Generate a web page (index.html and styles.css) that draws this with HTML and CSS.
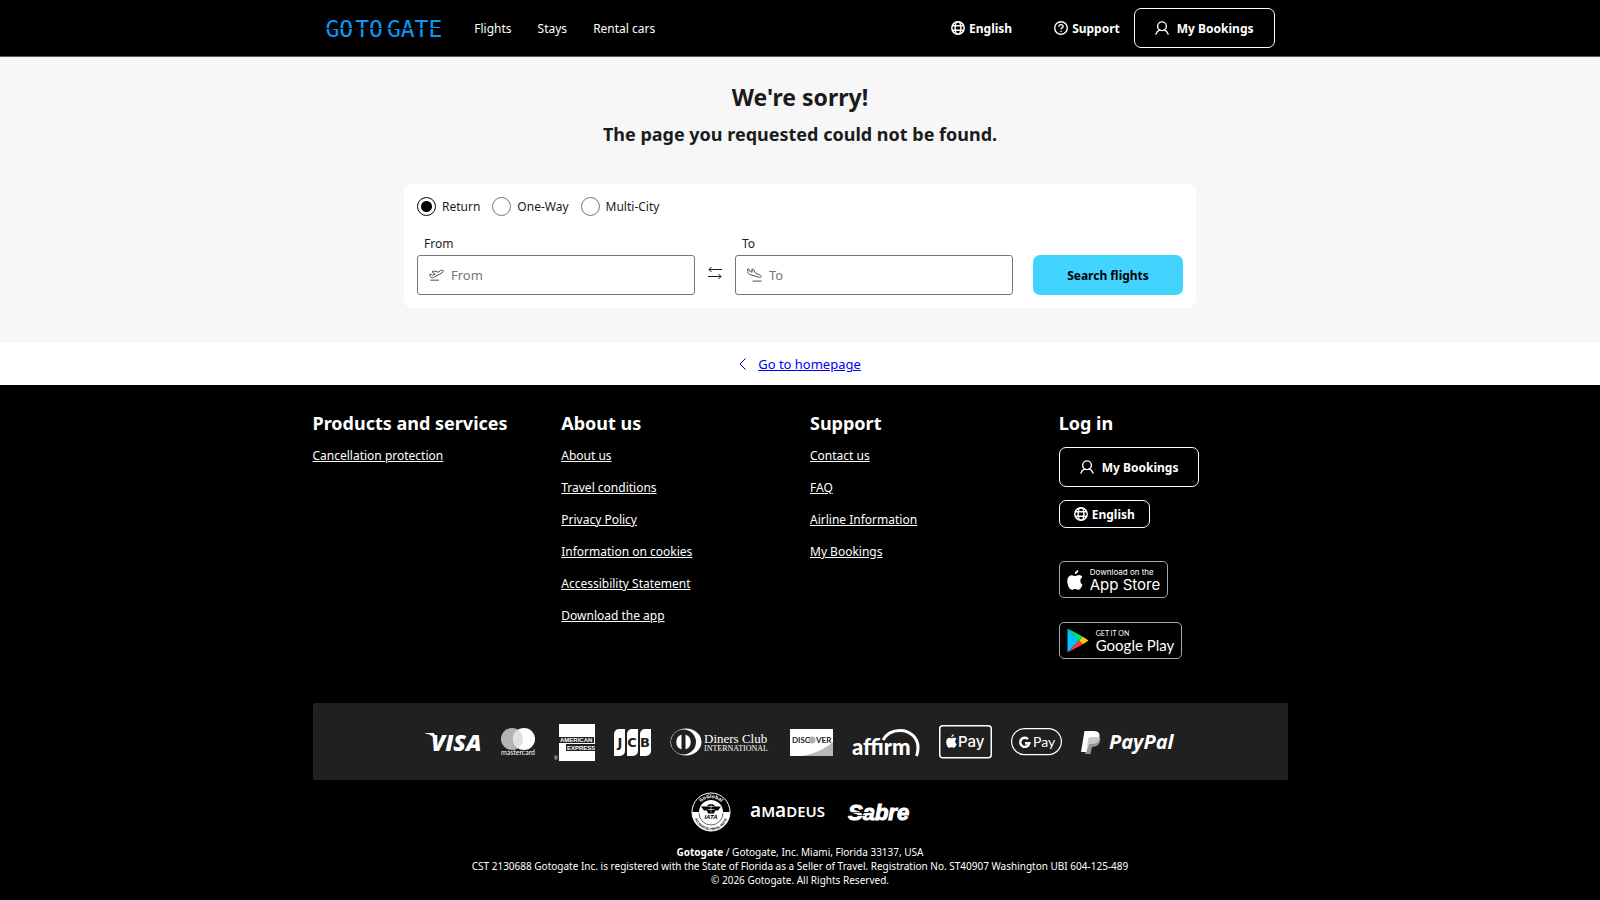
FILE: index.html
```html
<!DOCTYPE html>
<html lang="en">

<head>
    <meta charset="UTF-8">
    <meta name="viewport" content="width=device-width, initial-scale=1">
    <title>Gotogate</title>
    <link rel="stylesheet" href="styles.css">
</head>

<body>
    <!-- Shared icons -->
    <svg class="sprite" aria-hidden="true">
        <symbol id="icon-globe" viewBox="0 0 16 16">
            <g fill="none" stroke="currentColor" stroke-width="1.7">
                <circle cx="8" cy="8" r="7.1" />
                <ellipse cx="8" cy="8" rx="3.3" ry="7.1" />
                <path d="M1.5 5.5h13M1.5 10.5h13" />
            </g>
        </symbol>
        <symbol id="icon-user" viewBox="0 0 16 16">
            <g fill="none" stroke="currentColor" stroke-width="1.6" stroke-linecap="round">
                <circle cx="8" cy="6" r="5" />
                <path d="M1 15c.8-2.600 2.400-4.200 4.600-4.900M15 15c-.8-2.600-2.400-4.200-4.600-4.900" />
            </g>
        </symbol>
        <symbol id="icon-apple" viewBox="0 0 16 20">
            <path fill="currentColor" d="M11.300 0c.2 1.900-1.700 4.300-3.600 4.200C7.500 2.300 9.400.200 11.300 0zM15.500 14.700c-.9 2.400-2.500 5.100-4.200 5.100-1.200 0-1.700-.8-3.200-.8s-2 .8-3.200.8C2.600 19.800.300 15.400.300 11.300c0-3.900 2.200-6.100 4.600-6.100 1.400 0 2.400.9 3.400.9.900 0 2.100-1 3.900-1 1.300 0 2.500.7 3.200 1.800-2.900 1.700-2.500 6.200.1 7.800z" />
        </symbol>
    </svg>

    <header class="site-header">
        <div class="container header-inner">
            <a href="#" class="logo" aria-label="Gotogate"><span>GO</span><span>TO</span><span class="logo-gate">GATE</span></a>
            <nav class="main-nav">
                <a href="#">Flights</a>
                <a href="#">Stays</a>
                <a href="#">Rental cars</a>
            </nav>
            <div class="header-actions">
                <button type="button" class="btn-plain"><svg class="icon"><use href="#icon-globe" /></svg>English</button>
                <a href="#" class="btn-plain support">
                    <svg class="icon" viewBox="0 0 16 16" fill="none" stroke="currentColor" stroke-width="1.6">
                        <circle cx="8" cy="8" r="7.200" />
                        <path d="M5.600 6.600c0-1.500 1.100-2.500 2.400-2.500s2.400.9 2.400 2.200c0 1.600-2.400 1.600-2.400 3.200M8 11v1.600" />
                    </svg>Support</a>
                <button type="button" class="btn-outline"><svg class="icon"><use href="#icon-user" /></svg>My Bookings</button>
            </div>
        </div>
    </header>

    <main>
        <section class="hero">
            <h1>We're sorry!</h1>
            <h2>The page you requested could not be found.</h2>
            <form class="search">
                <div class="trip-types">
                    <label><input type="radio" name="trip" checked>Return</label>
                    <label><input type="radio" name="trip">One-Way</label>
                    <label><input type="radio" name="trip">Multi-City</label>
                </div>
                <div class="search-row">
                    <div class="field">
                        <label for="from">From</label>
                        <div class="field-box">
                            <svg class="plane" viewBox="0 0 16 12" fill="none" stroke="currentColor" stroke-linejoin="round">
                                <path d="M.500 5.500 2 4.900l2 1.400 2.500-1.300L3.200 2.500l1.500-.8 5 1.200 2.600-1.600c1-.6 2.400-.7 2.800 0 .4.7-.1 1.700-1.100 2.200L5 8.600c-1.500.7-2.500.5-3.200-.6z" />
                                <path d="M1.500 11.500h9" />
                            </svg>
                            <input type="text" id="from" placeholder="From">
                        </div>
                    </div>
                    <button type="button" class="swap" aria-label="Swap">
                        <svg viewBox="0 0 14 14" fill="none" stroke="currentColor">
                            <path d="M14 3.500H1M3.500 1 1 3.500 3.500 6M0 10.500h13M10.500 8l2.500 2.500-2.500 2.500" />
                        </svg>
                    </button>
                    <div class="field">
                        <label for="to">To</label>
                        <div class="field-box">
                            <svg class="plane" viewBox="0 0 16 14" fill="none" stroke="currentColor" stroke-linejoin="round">
                                <path d="M.800.500 2.200 1l1 2.200L5.500 4 5.200.600l1.500.5 2.600 4.200 4 1.500c1.300.5 2 1.400 1.700 2.100-.3.800-1.400.8-2.500.4L3 6.500C1.500 5.800.800 4.800.800 3z" />
                                <path d="M6 13.500h9.500" />
                            </svg>
                            <input type="text" id="to" placeholder="To">
                        </div>
                    </div>
                    <button type="submit" class="btn-search">Search flights</button>
                </div>
            </form>
        </section>
        <div class="home-link">
            <svg viewBox="0 0 7 12" fill="none" stroke="currentColor"><path d="M6.500.500 1 6l5.500 5.500" /></svg>
            <a href="#">Go to homepage</a>
        </div>
    </main>

    <footer class="site-footer">
        <div class="container footer-columns">
            <div>
                <h3>Products and services</h3>
                <ul>
                    <li><a href="#">Cancellation protection</a></li>
                </ul>
            </div>
            <div>
                <h3>About us</h3>
                <ul>
                    <li><a href="#">About us</a></li>
                    <li><a href="#">Travel conditions</a></li>
                    <li><a href="#">Privacy Policy</a></li>
                    <li><a href="#">Information on cookies</a></li>
                    <li><a href="#">Accessibility Statement</a></li>
                    <li><a href="#">Download the app</a></li>
                </ul>
            </div>
            <div>
                <h3>Support</h3>
                <ul>
                    <li><a href="#">Contact us</a></li>
                    <li><a href="#">FAQ</a></li>
                    <li><a href="#">Airline Information</a></li>
                    <li><a href="#">My Bookings</a></li>
                </ul>
            </div>
            <div class="login">
                <h3>Log in</h3>
                <button type="button" class="btn-outline"><svg class="icon"><use href="#icon-user" /></svg>My Bookings</button>
                <button type="button" class="btn-outline small"><svg class="icon"><use href="#icon-globe" /></svg>English</button>
                <a href="#" class="store">
                    <svg class="store-apple"><use href="#icon-apple" /></svg>
                    <span class="store-text app-store"><small>Download on the</small><b>App Store</b></span>
                </a>
                <a href="#" class="store">
                    <svg class="store-play" viewBox="0 0 22 25">
                        <path fill="#00c3ff" d="M.500.500v24L12 12.500z" />
                        <path fill="#00e676" d="M.500.500 16 8.800 12 12.500z" />
                        <path fill="#ff3a44" d="M.500 24.500 16 16.200 12 12.500z" />
                        <path fill="#ffce00" d="M16 8.800 21.500 12.500 16 16.200 12 12.500z" />
                    </svg>
                    <span class="store-text google-play"><small>GET IT ON</small><b>Google Play</b></span>
                </a>
            </div>
        </div>

        <!-- Payment methods -->
        <div class="container payments">
            <svg width="58" height="38" role="img" aria-label="Visa">
                <path fill="#fff" d="M1 10h9l3 9C10 14 6 11 1 10.500z" />
                <text class="visa" x="7" y="28">VISA</text>
            </svg>
            <svg width="34" height="38" role="img" aria-label="Mastercard">
                <circle cx="11" cy="16" r="11" fill="#b4b4b4" />
                <circle cx="23" cy="16" r="11" fill="#fff" />
                <path fill="#e0e0e0" d="M17 6.800a11 11 0 0 1 0 18.400 11 11 0 0 1 0-18.400z" />
                <text class="mastercard" x="17" y="32" text-anchor="middle">mastercard</text>
            </svg>
            <svg width="41" height="38" role="img" aria-label="American Express">
                <path fill="#fff" d="M5 1h36v37H5z" />
                <path fill="#202020" d="M5 14h35v6H5zM12 21h29v7H12z" />
                <g class="amex">
                    <text x="6" y="19">AMERICAN</text>
                    <text x="13" y="27">EXPRESS</text>
                </g>
                <text class="reg" x="0" y="37">®</text>
            </svg>
            <svg width="37" height="38" role="img" aria-label="JCB">
                <path fill="#fff" d="M5 6h6v22a5 5 0 0 1-5 5H0V11a5 5 0 0 1 5-5zM18 6h6v22a5 5 0 0 1-5 5h-6V11a5 5 0 0 1 5-5zM31 6h6v22a5 5 0 0 1-5 5h-6V11a5 5 0 0 1 5-5z" />
                <g class="jcb" text-anchor="middle">
                    <text x="6" y="24">J</text>
                    <text x="18" y="24">C</text>
                    <text x="31" y="24">B</text>
                </g>
            </svg>
            <svg width="101" height="38" role="img" aria-label="Diners Club International">
                <ellipse cx="16" cy="19" rx="15.500" ry="13.500" fill="#fff" />
                <circle cx="13.500" cy="19" r="12.500" fill="#202020" />
                <path fill="#fff" d="M11.500 11.500v15a8 8 0 0 1 0-15zM15.500 11.500v15a8 8 0 0 0 0-15z" />
                <text class="diners" x="34" y="20">Diners Club</text>
                <text class="diners-sub" x="34" y="28">INTERNATIONAL</text>
            </svg>
            <svg width="43" height="38" role="img" aria-label="Discover">
                <path fill="#fff" d="M0 6h43v27H0z" />
                <path fill="#b8b8b8" d="M43 19v14H12c12-2 23-7 31-14z" />
                <circle cx="22" cy="17" r="3.500" fill="#b0b0b0" />
                <text class="discover" x="2" y="20">DISC</text>
                <text class="discover" x="26" y="20">VER</text>
            </svg>
            <svg width="68" height="38" role="img" aria-label="Affirm">
                <text class="affirm" x="0" y="32">affirm</text>
                <path fill="none" stroke="#fff" stroke-width="3" d="M31 17C35 10 41 7.500 48 7.500c11 0 18 8 18 17 0 3-.5 6-1.500 8.500" />
            </svg>
            <svg width="53" height="38" role="img" aria-label="Apple Pay">
                <rect x=".75" y="2.750" width="51.500" height="32" rx="3" fill="none" stroke="#fff" stroke-width="1.500" />
                <use href="#icon-apple" x="7" y="11" width="11" height="14" color="#fff" />
                <text class="apple-pay" x="19" y="24">Pay</text>
            </svg>
            <svg width="51" height="38" role="img" aria-label="Google Pay">
                <rect x=".6" y="5.600" width="49.800" height="26" rx="13" fill="none" stroke="#fff" stroke-width="1.200" />
                <path fill="none" stroke="#fff" stroke-width="2.400" d="M17 16a4.600 4.600 0 1 0 1.300 4.200H14" />
                <text class="google-pay" x="22" y="24">Pay</text>
            </svg>
            <svg width="95" height="38" role="img" aria-label="PayPal">
                <path fill="#959595" d="M7 14h12c1 6-2 10-8 10l-1.500 7H4z" />
                <path fill="#c8c8c8" d="M6 11h12c2 7-2 10-7 10H8l-1 5H4z" />
                <path fill="#fff" d="M3.500 8H13c4.500 0 6.500 3 5 6H10c-2 0-2.600 1-3 3L5.500 29H0z" />
                <text class="paypal" x="28" y="26">PayPal</text>
            </svg>
        </div>

        <div class="partners">
            <svg width="40" height="40" viewBox="0 0 40 40" role="img" aria-label="IATA GoGlobal accredited travel agency">
                <circle cx="20" cy="20" r="19" fill="#000" stroke="#fff" />
                <path fill="#fff" d="M1 20h38a19 19 0 0 1-38 0z" />
                <circle cx="20" cy="20" r="12" fill="#fff" />
                <path d="M8 21a12 12 0 0 0 24 0" fill="none" stroke="#000" stroke-width=".6" />
                <path id="arc-top" fill="none" d="M6 20a14 14 0 0 1 28 0" />
                <path id="arc-bottom" fill="none" d="M3 21a17 17 0 0 0 34 0" />
                <text class="iata-top"><textPath href="#arc-top" startOffset="50%" text-anchor="middle">GoGlobal</textPath></text>
                <text class="iata-bottom"><textPath href="#arc-bottom" startOffset="50%" text-anchor="middle">ACCREDITED TRAVEL AGENT</textPath></text>
                <circle cx="20" cy="16.500" r="4.500" fill="#000" />
                <path fill="#000" d="M10 14.500h7l3 2 3-2h7l-3 4h-3l-1 3h-6l-1-3h-3z" />
                <path d="M16.500 14.500h7M16.500 17.500h7M20 12.500v8" stroke="#fff" stroke-width=".6" />
                <text class="iata" x="20" y="27" text-anchor="middle">IATA</text>
            </svg>
            <svg width="78" height="40" role="img" aria-label="Amadeus">
                <text class="amadeus" x="0" y="25"><tspan class="big">a</tspan>M<tspan class="big">a</tspan>DEUS</text>
            </svg>
            <svg width="63" height="40" role="img" aria-label="Sabre">
                <text class="sabre" x="1" y="28">Sabre</text>
                <path d="M0 20.500h25M0 23.500h18" stroke="#000" stroke-width=".7" />
            </svg>
        </div>

        <p class="legal">
            <strong>Gotogate</strong> / Gotogate, Inc. Miami, Florida 33137, USA<br>
            CST 2130688 Gotogate Inc. is registered with the State of Florida as a Seller of Travel. Registration No. ST40907 Washington UBI 604-125-489<br>
            © 2026 Gotogate. All Rights Reserved.
        </p>
    </footer>
</body>

</html>
```
FILE: styles.css
```css
* {
    box-sizing: border-box;
}

body {
    margin: 0;
    font-family: "Noto Sans", sans-serif;
    font-size: 12px;
    color: #1b1b1b;
    background: #000;
}

button,
input {
    font: inherit;
    color: inherit;
}

button {
    cursor: pointer;
}

.sprite {
    display: none;
}

.container {
    max-width: 975px;
    margin: 0 auto;
}

.icon {
    width: 14px;
    height: 14px;
    flex: none;
}

/* Header */
.site-header {
    border-bottom: 1px solid #555;
    background: #000;
    color: #fff;
}

.header-inner {
    display: flex;
    align-items: center;
    height: 56px;
    padding: 0 13px;
}

.logo {
    position: relative;
    display: flex;
    gap: 2px;
    padding-top: 2px;
    font-family: "DejaVu Sans Mono", monospace;
    font-size: 23px;
    line-height: 24px;
    color: #0c98f5;
    text-decoration: none;
}

/* slit through the letters */
.logo::after {
    content: "";
    position: absolute;
    top: 13px;
    left: 0;
    right: 0;
    height: 1px;
    background: #000;
}

.logo-gate {
    margin-left: 2px;
}

.main-nav {
    display: flex;
    gap: 26px;
    margin-left: 32px;
}

.main-nav a {
    color: #fff;
    text-decoration: none;
}

.header-actions {
    display: flex;
    align-items: center;
    margin-left: auto;
}

.btn-plain {
    display: flex;
    align-items: center;
    gap: 4px;
    padding: 0;
    border: none;
    background: none;
    color: #fff;
    font-weight: bold;
    text-decoration: none;
}

.support {
    margin: 0 14px 0 42px;
}

.btn-outline {
    display: flex;
    align-items: center;
    justify-content: center;
    gap: 8px;
    height: 40px;
    padding: 0 20px;
    border: 1px solid #fff;
    border-radius: 7px;
    background: #000;
    color: #fff;
    font-weight: bold;
}

.btn-outline.small {
    gap: 4px;
    height: 28px;
    padding: 0 14px;
}

/* Search */
.hero {
    padding: 24px 16px 35px;
    background: #f7f7f7;
    text-align: center;
}

.hero h1 {
    margin: 0;
    font-size: 23px;
    line-height: 32px;
}

.hero h2 {
    margin: 7px 0 36px;
    font-size: 18px;
    line-height: 28px;
}

.search {
    max-width: 792px;
    margin: 0 auto;
    padding: 13px;
    border-radius: 8px;
    background: #fff;
    text-align: left;
}

.trip-types {
    display: flex;
    gap: 12px;
}

.trip-types label {
    display: flex;
    align-items: center;
    gap: 6px;
}

.trip-types input {
    appearance: none;
    width: 19px;
    height: 19px;
    margin: 0;
    border: 1px solid #767676;
    border-radius: 50%;
    background: #fff;
}

.trip-types input:checked {
    border-color: #000;
    background: radial-gradient(circle, #000 5px, #fff 6px);
}

.search-row {
    display: flex;
    align-items: flex-end;
    margin-top: 17px;
}

.field {
    flex: 1;
}

.field label {
    display: block;
    padding-left: 7px;
    line-height: 22px;
}

.field-box {
    display: flex;
    align-items: center;
    gap: 7px;
    height: 40px;
    padding: 0 11px;
    border: 1px solid #767676;
    border-radius: 3px;
}

.plane {
    width: 15px;
    height: 14px;
    color: #444;
}

.field-box input {
    flex: 1;
    min-width: 0;
    padding: 0;
    border: none;
    outline: none;
    background: none;
    font-size: 13px;
}

.field-box input::placeholder {
    color: #767676;
}

.swap {
    width: 40px;
    height: 40px;
    padding: 0;
    border: none;
    background: none;
}

.swap svg {
    width: 14px;
    height: 14px;
}

.btn-search {
    width: 150px;
    height: 40px;
    margin-left: 20px;
    border: none;
    border-radius: 7px;
    background: #42d4ff;
    color: #000;
    font-weight: bold;
}

.home-link {
    display: flex;
    align-items: center;
    justify-content: center;
    gap: 12px;
    height: 42px;
    background: #fff;
    color: #0000ee;
    font-size: 13px;
}

.home-link svg {
    width: 7px;
    height: 12px;
}

.home-link a {
    color: #0000ee;
}

/* Footer */
.site-footer {
    padding: 24px 16px 13px;
    background: #000;
    color: #fff;
}

.footer-columns {
    display: grid;
    grid-template-columns: repeat(4, 1fr);
    gap: 20px;
}

.footer-columns h3 {
    margin: 0;
    font-size: 18px;
    line-height: 28px;
}

.footer-columns ul {
    display: flex;
    flex-direction: column;
    gap: 12px;
    margin: 9px 0 0;
    padding: 0;
    list-style: none;
    line-height: 20px;
}

.footer-columns a {
    color: #fff;
}

.login {
    display: flex;
    flex-direction: column;
    align-items: flex-start;
}

.login .btn-outline {
    margin-top: 10px;
}

.login .small {
    margin: 13px 0 9px;
}

.store {
    display: flex;
    align-items: center;
    gap: 7px;
    height: 37px;
    margin-top: 24px;
    padding: 0 7px;
    border: 1px solid #a6a6a6;
    border-radius: 5px;
    text-decoration: none;
}

.store-apple {
    width: 16px;
    height: 20px;
}

.store-play {
    width: 22px;
    height: 25px;
}

.store-text {
    display: flex;
    flex-direction: column;
}

.store-text small {
    font-size: 7px;
    line-height: 9px;
}

.store-text.app-store small {
    font-size: 8px;
}

.store-text b {
    font-size: 15px;
    font-weight: normal;
    line-height: 15px;
}

.app-store {
    font-family: Inter, sans-serif;
}

.google-play {
    font-family: Lato, sans-serif;
}

.payments {
    display: flex;
    align-items: center;
    justify-content: center;
    flex-wrap: wrap;
    gap: 19px;
    min-height: 77px;
    margin-top: 44px;
    border-radius: 2px;
    background: #202020;
}

.payments svg,
.partners svg {
    flex: none;
    fill: #fff;
}

.visa {
    font: italic 800 23px "Open Sans", sans-serif;
}

.mastercard {
    font: 7px Lato, sans-serif;
}

.amex {
    font: bold 6px "Liberation Sans", sans-serif;
}

.reg {
    font: 5px "Liberation Sans", sans-serif;
}

.jcb {
    font: bold 13px "DejaVu Sans", sans-serif;
    fill: #202020;
}

.diners {
    font: 13px "Liberation Serif", serif;
}

.diners-sub {
    font: 8px "Liberation Serif", serif;
}

.discover {
    font: bold 8px Lato, sans-serif;
    fill: #202020;
}

.affirm {
    font: 900 22px Lato, sans-serif;
}

.apple-pay {
    font: 500 15px Inter, sans-serif;
}

.google-pay {
    font: 14px Lato, sans-serif;
}

.paypal {
    font: italic bold 20px "Open Sans", sans-serif;
}

.partners {
    display: flex;
    align-items: center;
    justify-content: center;
    gap: 19px;
    margin-top: 12px;
}

.iata {
    font: italic bold 6px "Liberation Sans", sans-serif;
    fill: #000;
}

.iata-top {
    font: bold 5px "Noto Sans", sans-serif;
}

.iata-bottom {
    font: bold 3px "Noto Sans", sans-serif;
    fill: #000;
}

.amadeus {
    font: 600 15px "Noto Sans", sans-serif;
}

.amadeus .big {
    font-size: 19px;
}

.sabre {
    font: italic bold 22px "Liberation Sans", sans-serif;
    stroke: #fff;
    stroke-width: 1px;
}

.legal {
    margin: 13px 0 0;
    font-size: 10px;
    line-height: 14px;
    text-align: center;
}
```
